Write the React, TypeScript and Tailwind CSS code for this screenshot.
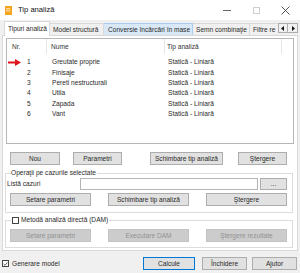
import type { ReactNode } from "react";

const rows = [
  { nr: 1, name: "Greutate proprie", tip: "Statică - Liniară" },
  { nr: 2, name: "Finisaje", tip: "Statică - Liniară" },
  { nr: 3, name: "Pereti nestructurali", tip: "Statică - Liniară" },
  { nr: 4, name: "Utila", tip: "Statică - Liniară" },
  { nr: 5, name: "Zapada", tip: "Statică - Liniară" },
  { nr: 6, name: "Vant", tip: "Statică - Liniară" },
];

function Btn({ className, children, disabled }: { className: string; children: ReactNode; disabled?: boolean }) {
  return (
    <div
      className={
        "flex items-center justify-center border " +
        (disabled ? "bg-[#cccccc] border-[#c4c4c4] text-[#929292] " : "bg-[#e1e1e1] border-[#adadad] text-[#2a2a2a] ") +
        className
      }
    >
      {children}
    </div>
  );
}

function CheckBox({ checked }: { checked?: boolean }) {
  return (
    <div className="w-[7px] h-[7px] border border-[#444] bg-white flex items-center justify-center">
      {checked && (
        <svg width="6" height="6" viewBox="0 0 6 6">
          <path d="M0.8 3.1 L2.4 4.6 L5.3 1.2" stroke="#222" strokeWidth="0.9" fill="none" />
        </svg>
      )}
    </div>
  );
}

export default function App() {
  return (
    <div className="w-[300px] h-[273px] overflow-hidden bg-[#f0f0f0] font-['Liberation_Sans',Arial,sans-serif] text-[6.6px] leading-[8px] text-[#2a2a2a]">
      {/* Title bar */}
      <div className="h-[20px] bg-white flex items-center">
        <div className="ml-[5px] w-[7px] h-[9px] bg-[#f6a31e] flex items-center justify-center text-[6px] leading-[6px] font-bold text-[#fde2b0]">R</div>
        <span className="ml-[6px] text-[7.6px] text-[#111]">Tip analiză</span>
        <div className="ml-auto flex items-center">
          <div className="w-[8px] h-px bg-[#666]" />
          <div className="ml-[22px] w-[7px] h-[7px] border border-[#cfcfcf]" />
          <svg className="ml-[21px] mr-[10px]" width="9" height="9" viewBox="0 0 9 9">
            <path d="M0.5 0.5 L8.5 8.5 M8.5 0.5 L0.5 8.5" stroke="#444" strokeWidth="0.9" />
          </svg>
        </div>
      </div>

      {/* Tabs */}
      <div className="h-[15px] flex items-end pl-[4px] relative">
        <div className="relative z-10 w-[46px] h-[15px] -mb-px bg-white border border-b-0 border-[#d9d9d9] flex items-center pl-[3px]">Tipuri analiză</div>
        <div className="w-[54px] h-[12px] border-t border-r border-[#d9d9d9] flex items-center pl-[3px]">Model structură</div>
        <div className="w-[89px] h-[12px] bg-[#d8e8f7] border-t border-r border-[#a9cdee] flex items-center pl-[4px]">Conversie încărcări în mase</div>
        <div className="w-[57px] h-[12px] border-t border-r border-[#d9d9d9] flex items-center pl-[3px]">Semn combinaţie</div>
        <div className="w-[28px] h-[12px] overflow-hidden whitespace-nowrap border-t border-[#d9d9d9] flex items-center pl-[3px]">Filtre re</div>
        <div className="flex mb-[2px]">
          <div className="w-[10px] h-[10px] border border-[#adadad] bg-[#f0f0f0] flex items-center justify-center">
            <svg width="4" height="5" viewBox="0 0 4 5"><path d="M3 0 L0 2.5 L3 5 Z" fill="#111" /></svg>
          </div>
          <div className="w-[10px] h-[10px] border border-l-0 border-[#adadad] bg-[#f0f0f0] flex items-center justify-center">
            <svg width="4" height="5" viewBox="0 0 4 5"><path d="M1 0 L4 2.5 L1 5 Z" fill="#111" /></svg>
          </div>
        </div>
      </div>

      {/* Tab panel */}
      <div className="ml-[2px] w-[296px] bg-white border border-[#d9d9d9] pb-[2px]">
        {/* List */}
        <div className="ml-[3px] mt-[2px] w-[288px] h-[106px] border border-[#b4b6ba] bg-white">
          <div className="h-[15px] flex items-center text-[#333]">
            <div className="w-[40px] h-full flex items-center pl-[5px] border-r border-[#e5e5e5]">Nr.</div>
            <div className="w-[118px] h-full flex items-center pl-[4px] border-r border-[#e5e5e5]">Nume</div>
            <div className="w-[117px] h-full flex items-center pl-[2px] border-r border-[#e5e5e5]">Tip analiză</div>
          </div>
          <div className="mt-[3px]">
            {rows.map((r) => (
              <div key={r.nr} className="h-[10.4px] flex items-center text-[#2a2a2a]">
                <div className="w-[40px] flex items-center">
                  {r.nr === 1 ? (
                    <>
                      <svg className="ml-px" width="13" height="7" viewBox="0 0 13 7">
                        <path d="M0 2.5 H7 V0 L13 3.5 L7 7 V4.5 H0 Z" fill="#e0141c" />
                      </svg>
                      <span className="ml-[6px]">{r.nr}</span>
                    </>
                  ) : (
                    <span className="ml-[20px]">{r.nr}</span>
                  )}
                </div>
                <div className="w-[118px] pl-[5px]">{r.name}</div>
                <div className="pl-[3px]">{r.tip}</div>
              </div>
            ))}
          </div>
        </div>

        {/* Buttons */}
        <div className="mt-[8px] flex">
          <Btn className="ml-[7px] w-[50px] h-[13px]">Nou</Btn>
          <Btn className="ml-[13px] w-[49px] h-[13px]">Parametri</Btn>
          <Btn className="ml-[28px] w-[73px] h-[13px]">Schimbare tip analiză</Btn>
          <Btn className="ml-[15px] w-[49px] h-[13px]">Ştergere</Btn>
        </div>

        {/* Operatii group */}
        <fieldset className="ml-[2px] mt-[4px] w-[288px] border border-[#dcdcdc] pb-[6px]">
          <legend className="ml-[5px] pr-px leading-[8px]">Operaţii pe cazurile selectate</legend>
          <div className="mt-px flex items-center">
            <span className="ml-px w-[73px]">Listă cazuri</span>
            <div className="w-[178px] h-[12px] border border-[#b4b6ba] bg-white" />
            <Btn className="ml-[2px] w-[27px] h-[12px]">...</Btn>
          </div>
          <div className="mt-[3px] flex">
            <Btn className="ml-[4px] w-[81px] h-[13px]">Setare parametri</Btn>
            <Btn className="ml-[17px] w-[81px] h-[13px]">Schimbare tip analiză</Btn>
            <Btn className="ml-[17px] w-[81px] h-[13px]">Ştergere</Btn>
          </div>
        </fieldset>

        {/* DAM group */}
        <fieldset className="ml-[2px] mt-[3px] w-[288px] border border-[#dcdcdc] pb-[5px]">
          <legend className="ml-[5px] pl-px pr-px leading-[8px]">
            <div className="flex items-center">
              <CheckBox />
              <span className="ml-[2px]">Metodă analiză directă (DAM)</span>
            </div>
          </legend>
          <div className="mt-[5px] flex">
            <Btn disabled className="ml-[4px] w-[81px] h-[13px]">Setare parametri</Btn>
            <Btn disabled className="ml-[17px] w-[81px] h-[13px]">Executare DAM</Btn>
            <Btn disabled className="ml-[17px] w-[81px] h-[13px]">Ştergere rezultate</Btn>
          </div>
        </fieldset>
      </div>

      {/* Bottom */}
      <div className="mt-[6px] flex items-center">
        <div className="ml-[2px]">
          <CheckBox checked />
        </div>
        <span className="ml-[3px]">Generare model</span>
        <div className="ml-auto flex mr-[3px]">
          <Btn className="w-[52px] h-[13px] !border-[#0078d7]">Calcule</Btn>
          <Btn className="ml-[7px] w-[45px] h-[13px]">Închidere</Btn>
          <Btn className="ml-[5px] w-[45px] h-[13px]">Ajutor</Btn>
        </div>
      </div>
    </div>
  );
}
